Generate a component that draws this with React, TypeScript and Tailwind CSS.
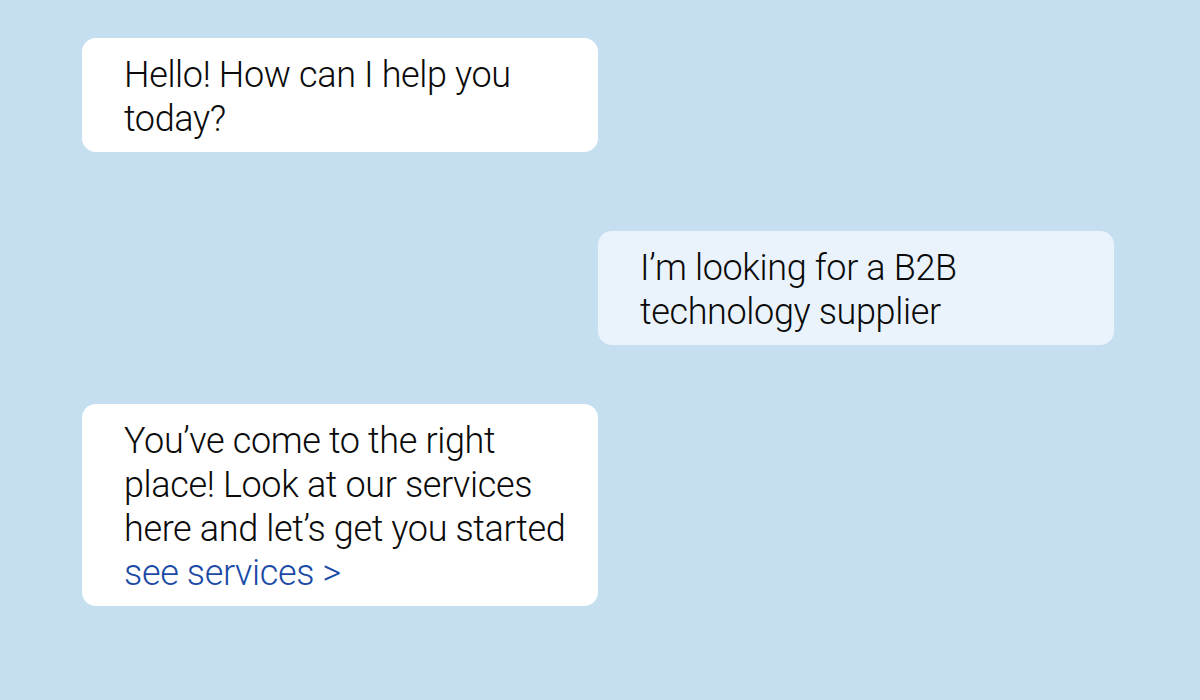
import React from 'react';

const font = { fontFamily: 'Roboto, "Noto Sans", sans-serif' };

function Bubble({ children, tint, className }: { children: React.ReactNode; tint?: boolean; className?: string }) {
  return (
    <div
      className={`w-[516px] rounded-[14px] pl-[42px] pr-[24px] pt-[15px] pb-[11px] text-[36px] font-light leading-[44px] tracking-[-0.01em] text-[#0a0a0a] ${
        tint ? 'bg-[#eaf3fb]' : 'bg-white'
      } ${className ?? ''}`}
    >
      {children}
    </div>
  );
}

export default function App() {
  return (
    <div className="w-[1200px] h-[700px] bg-[#c5dff0] overflow-hidden" style={font}>
      <div className="w-[1032px] ml-[82px] pt-[38px] flex flex-col">
        <Bubble>
          Hello! How can I help you
          <br />
          today?
        </Bubble>
        <div className="flex justify-end mt-[79px]">
          <Bubble tint>
            I’m looking for a B2B
            <br />
            technology supplier
          </Bubble>
        </div>
        <Bubble className="mt-[59px]">
          You’ve come to the right
          <br />
          place! Look at our services
          <br />
          here and let’s get you started
          <br />
          <a href="#" className="text-[#1a4aa6]">
            see services &gt;
          </a>
        </Bubble>
      </div>
    </div>
  );
}
